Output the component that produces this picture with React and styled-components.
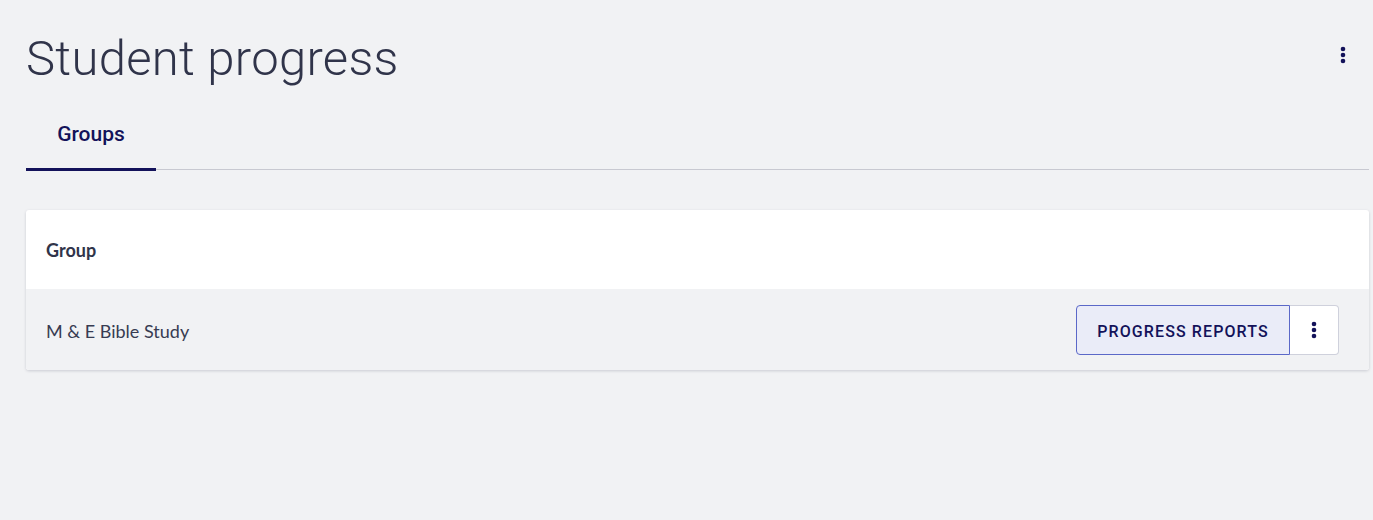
import styled, { createGlobalStyle } from 'styled-components'

const GlobalStyle = createGlobalStyle`
  html, body {
    margin: 0;
    padding: 0;
    background: #f1f2f4;
  }
  body {
    font-family: "Roboto", "Liberation Sans", sans-serif;
    color: #30344a;
  }
`

const Page = styled.div`
  width: 1373px;
  height: 520px;
  box-sizing: border-box;
  padding: 0 4px 0 26px;
  background: #f1f2f4;
`

const Header = styled.header`
  display: flex;
  align-items: flex-start;
  justify-content: space-between;
  padding-top: 29px;
  height: 114px;
  box-sizing: border-box;
`

const Title = styled.h1`
  margin: 0;
  font-family: "Roboto", "Liberation Sans", sans-serif;
  font-weight: 300;
  font-size: 49px;
  line-height: 60px;
  letter-spacing: 0.3px;
  color: #30344a;
`

const IconButton = styled.button`
  display: flex;
  align-items: center;
  justify-content: center;
  width: ${(p) => p.$size || 32}px;
  height: ${(p) => p.$size || 32}px;
  padding: 0;
  border: none;
  background: transparent;
  color: #13125a;
  cursor: pointer;
`

const TopMenu = styled(IconButton)`
  margin-top: 10px;
  margin-right: 10px;
`

const Tabs = styled.nav`
  display: flex;
  border-bottom: 1px solid #c8c9d1;
`

const Tab = styled.div`
  width: 130px;
  height: 57px;
  box-sizing: border-box;
  display: flex;
  align-items: flex-start;
  justify-content: center;
  padding-top: 8px;
  font-size: 21px;
  font-weight: 500;
  color: #13125a;
  border-bottom: ${(p) => (p.$active ? '3px solid #13125a' : '3px solid transparent')};
  margin-bottom: -2px;
`

const Card = styled.section`
  margin-top: 40px;
  background: #fff;
  border-radius: 3px;
  box-shadow: 0 1px 3px rgba(30, 35, 60, 0.18);
  overflow: hidden;
`

const TableHead = styled.div`
  height: 79px;
  display: flex;
  align-items: center;
  padding: 0 20px;
  font-family: "Lato", "Liberation Sans", sans-serif;
  font-weight: 700;
  font-size: 18px;
  color: #30344a;
`

const Row = styled.div`
  height: 81px;
  display: flex;
  align-items: center;
  justify-content: space-between;
  padding: 0 30px 0 20px;
  background: #f1f2f4;
`

const Cell = styled.span`
  padding-top: 2px;
  font-family: "Lato", "Liberation Sans", sans-serif;
  font-size: 18px;
  color: #383c52;
`

const ButtonGroup = styled.div`
  display: flex;
  height: 50px;
`

const PrimaryButton = styled.button`
  height: 50px;
  width: 214px;
  box-sizing: border-box;
  padding: 3px 0 0;
  border: 1px solid #5b68c8;
  border-radius: 4px 0 0 4px;
  background: #eaecf8;
  color: #13125a;
  font-family: "Roboto", "Liberation Sans", sans-serif;
  font-weight: 500;
  font-size: 16px;
  letter-spacing: 1.1px;
  text-transform: uppercase;
  cursor: pointer;
`

const MenuButton = styled(IconButton)`
  width: 49px;
  height: 50px;
  box-sizing: border-box;
  border: 1px solid #cfd1dc;
  border-left: none;
  border-radius: 0 4px 4px 0;
  background: #fff;
`

const Kebab = () => (
  <svg width="6" height="18" viewBox="0 0 6 18">
    <circle cx="3" cy="3" r="2.3" fill="currentColor" />
    <circle cx="3" cy="9" r="2.3" fill="currentColor" />
    <circle cx="3" cy="15" r="2.3" fill="currentColor" />
  </svg>
)

export default function App() {
  return (
    <>
      <GlobalStyle />
      <Page>
        <Header>
          <Title>Student progress</Title>
          <TopMenu aria-label="More">
            <Kebab />
          </TopMenu>
        </Header>
        <Tabs>
          <Tab $active>Groups</Tab>
        </Tabs>
        <Card>
          <TableHead>Group</TableHead>
          <Row>
            <Cell>M &amp; E Bible Study</Cell>
            <ButtonGroup>
              <PrimaryButton>Progress reports</PrimaryButton>
              <MenuButton aria-label="More">
                <Kebab />
              </MenuButton>
            </ButtonGroup>
          </Row>
        </Card>
      </Page>
    </>
  )
}
